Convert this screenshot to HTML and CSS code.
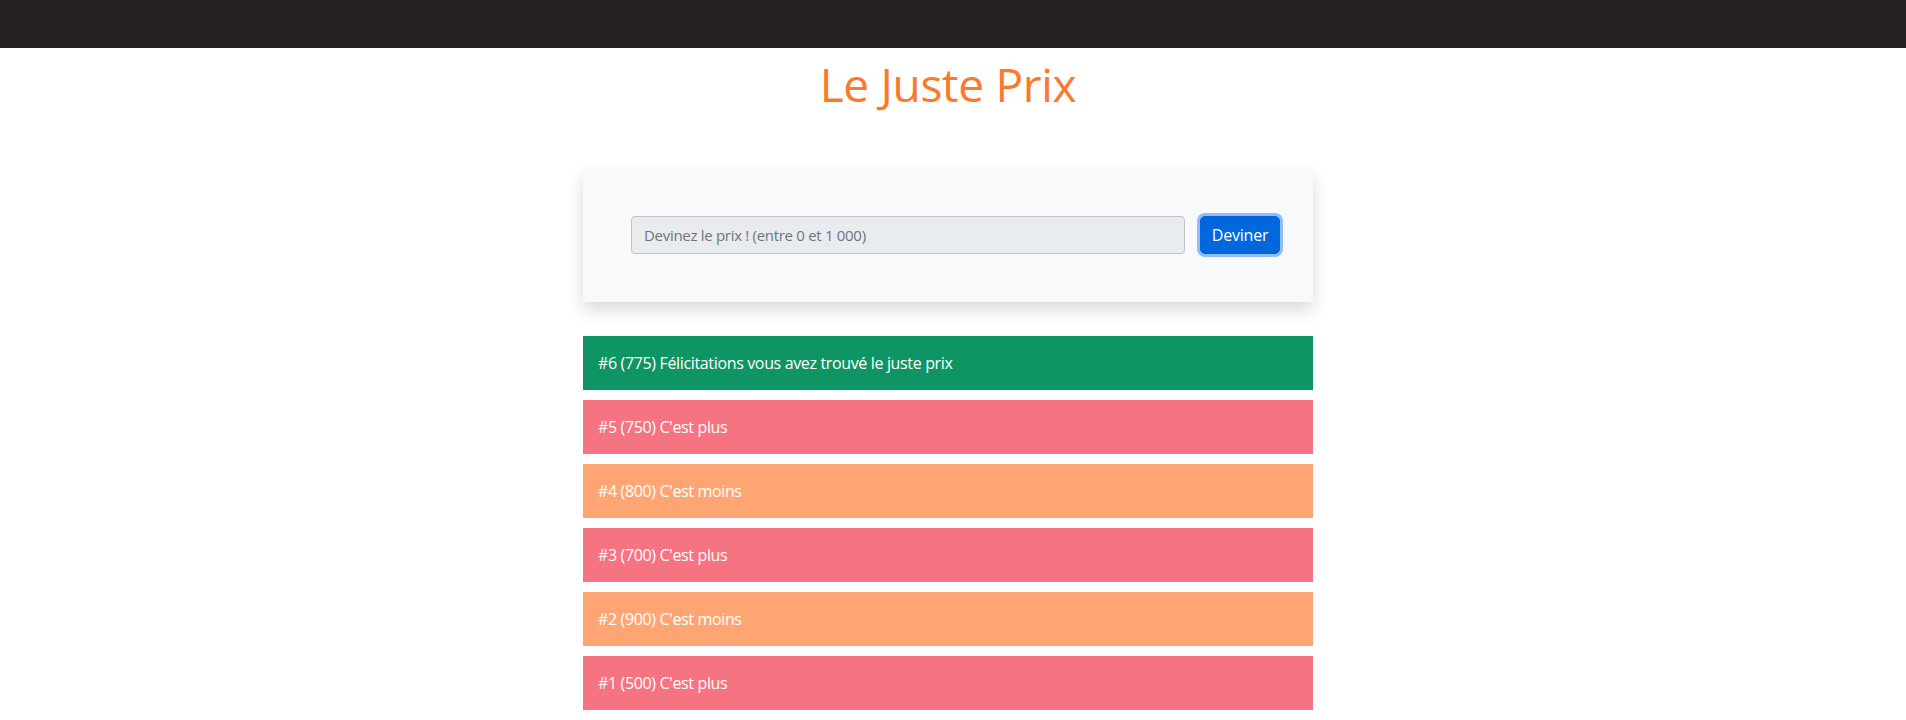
FILE: index.html
```html
<!DOCTYPE html>
<html lang="fr">
<head>
<meta charset="utf-8">
<title>Le Juste Prix</title>
<link rel="stylesheet" href="styles.css">
</head>
<body>
<nav class="navbar"></nav>
<div class="page">
  <main class="main">
    <h1 class="title">Le Juste Prix</h1>
    <section class="card">
      <form class="guess-form">
        <input class="guess-input" type="text" placeholder="Devinez le prix ! (entre 0 et 1 000)">
        <button class="guess-btn" type="button">Deviner</button>
      </form>
    </section>
    <ul class="results">
      <li class="result result-win">#6 (775) Félicitations vous avez trouvé le juste prix</li>
      <li class="result result-more">#5 (750) C'est plus</li>
      <li class="result result-less">#4 (800) C'est moins</li>
      <li class="result result-more">#3 (700) C'est plus</li>
      <li class="result result-less">#2 (900) C'est moins</li>
      <li class="result result-more">#1 (500) C'est plus</li>
    </ul>
  </main>
</div>
</body>
</html>
```
FILE: styles.css
```css
* { box-sizing: border-box; }
html, body { margin: 0; padding: 0; background: #fff; }
body {
  font-family: "Segoe UI", "Open Sans", "Noto Sans", sans-serif;
  font-size: 16px;
  line-height: 1.5;
  color: #212529;
}
.navbar {
  height: 48px;
  background: #24201f;
}
.page {
  padding-right: 10px;
}
.main {
  width: 730px;
  margin: 0 auto;
}
.title {
  margin: 8px 0 0;
  font-size: 46px;
  font-weight: 400;
  line-height: 1.25;
  letter-spacing: -0.3px;
  text-align: center;
  color: #f97a2b;
}
.card {
  margin-top: 55px;
  background: #f8f9fa;
  box-shadow: 0 8px 16px rgba(0, 0, 0, 0.15);
  padding: 47px 33px 48px 48px;
}
.guess-form {
  display: flex;
  align-items: center;
  gap: 15px;
}
.guess-input {
  flex: 1;
  height: 38px;
  padding: 6px 12px;
  font: inherit;
  font-size: 15px;
  letter-spacing: -0.3px;
  color: #495057;
  background: #e9ecef;
  border: 1px solid #bfc3c7;
  border-radius: 4px;
  outline: none;
}
.guess-input::placeholder { color: #6c757d; }
.guess-btn {
  width: 80px;
  height: 38px;
  padding: 6px 8px;
  font: inherit;
  font-size: 16px;
  letter-spacing: -0.2px;
  color: #fff;
  background: #0067dd;
  border: 1px solid #0067dd;
  border-radius: 5px;
  box-shadow: 0 0 0 3px #8fbdf8;
}
.results {
  list-style: none;
  margin: 34px 0 0;
  padding: 0;
  display: flex;
  flex-direction: column;
  gap: 10px;
}
.result {
  height: 54px;
  padding: 15px 15px;
  color: #fff;
  line-height: 24px;
  letter-spacing: -0.35px;
}
.result-win { background: #0e9563; }
.result-more { background: #f67381; }
.result-less { background: #ffa573; }
```
